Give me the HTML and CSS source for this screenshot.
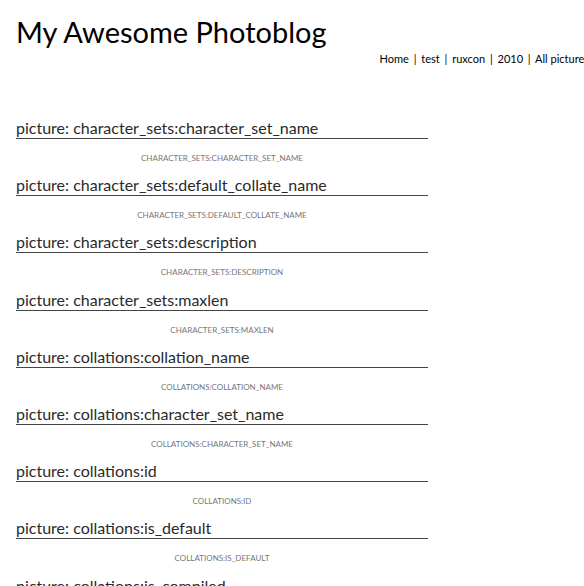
FILE: index.html
```html
<!DOCTYPE html>
<html>
<head>
<meta charset="utf-8">
<title>My Awesome Photoblog</title>
<link rel="stylesheet" href="styles.css">
</head>
<body>
<div class="page">
  <header class="header">
    <h1 class="site-title">My Awesome Photoblog</h1>
    <nav class="nav">
      <a href="#">Home</a> <span class="sep">|</span> <a href="#">test</a> <span class="sep">|</span> <a href="#">ruxcon</a> <span class="sep">|</span> <a href="#">2010</a> <span class="sep">|</span> <a href="#">All pictures</a>
    </nav>
  </header>
  <main class="posts">
    <article class="post"><h2 class="post-title">picture: character_sets:character_set_name</h2><p class="caption">character_sets:character_set_name</p></article>
    <article class="post"><h2 class="post-title">picture: character_sets:default_collate_name</h2><p class="caption">character_sets:default_collate_name</p></article>
    <article class="post"><h2 class="post-title">picture: character_sets:description</h2><p class="caption">character_sets:description</p></article>
    <article class="post"><h2 class="post-title">picture: character_sets:maxlen</h2><p class="caption">character_sets:maxlen</p></article>
    <article class="post"><h2 class="post-title">picture: collations:collation_name</h2><p class="caption">collations:collation_name</p></article>
    <article class="post"><h2 class="post-title">picture: collations:character_set_name</h2><p class="caption">collations:character_set_name</p></article>
    <article class="post"><h2 class="post-title">picture: collations:id</h2><p class="caption">collations:id</p></article>
    <article class="post"><h2 class="post-title">picture: collations:is_default</h2><p class="caption">collations:is_default</p></article>
    <article class="post"><h2 class="post-title">picture: collations:is_compiled</h2><p class="caption">collations:is_compiled</p></article>
  </main>
</div>
</body>
</html>
```
FILE: styles.css
```css
html, body {
  overflow: hidden;
}
body {
  margin: 0;
  background: #fff;
  font-family: Lato, "Liberation Sans", sans-serif;
  color: #333;
}
.page {
  width: 573px;
  padding: 14px 0 0 16px;
}
.header {
  display: flex;
  justify-content: space-between;
  align-items: flex-start;
}
.site-title {
  margin: 0;
  font-size: 29px;
  font-weight: normal;
  color: #000;
  line-height: 36px;
}
.nav {
  margin-top: 38px;
  font-size: 11px;
  color: #000;
  white-space: nowrap;
}
.nav a {
  color: #000;
  text-decoration: none;
}
.nav .sep {
  margin: 0 2px;
}
.posts {
  width: 412px;
  margin-top: 53px;
}
.post-title {
  margin: 0;
  font-size: 16px;
  font-weight: normal;
  color: #2a2a2a;
  line-height: 20px;
  border-bottom: 1px solid #444;
}
.caption {
  margin: 14px 0 12.2px;
  text-align: center;
  text-transform: uppercase;
  font-size: 8px;
  line-height: 10px;
  color: #777;
}
```
